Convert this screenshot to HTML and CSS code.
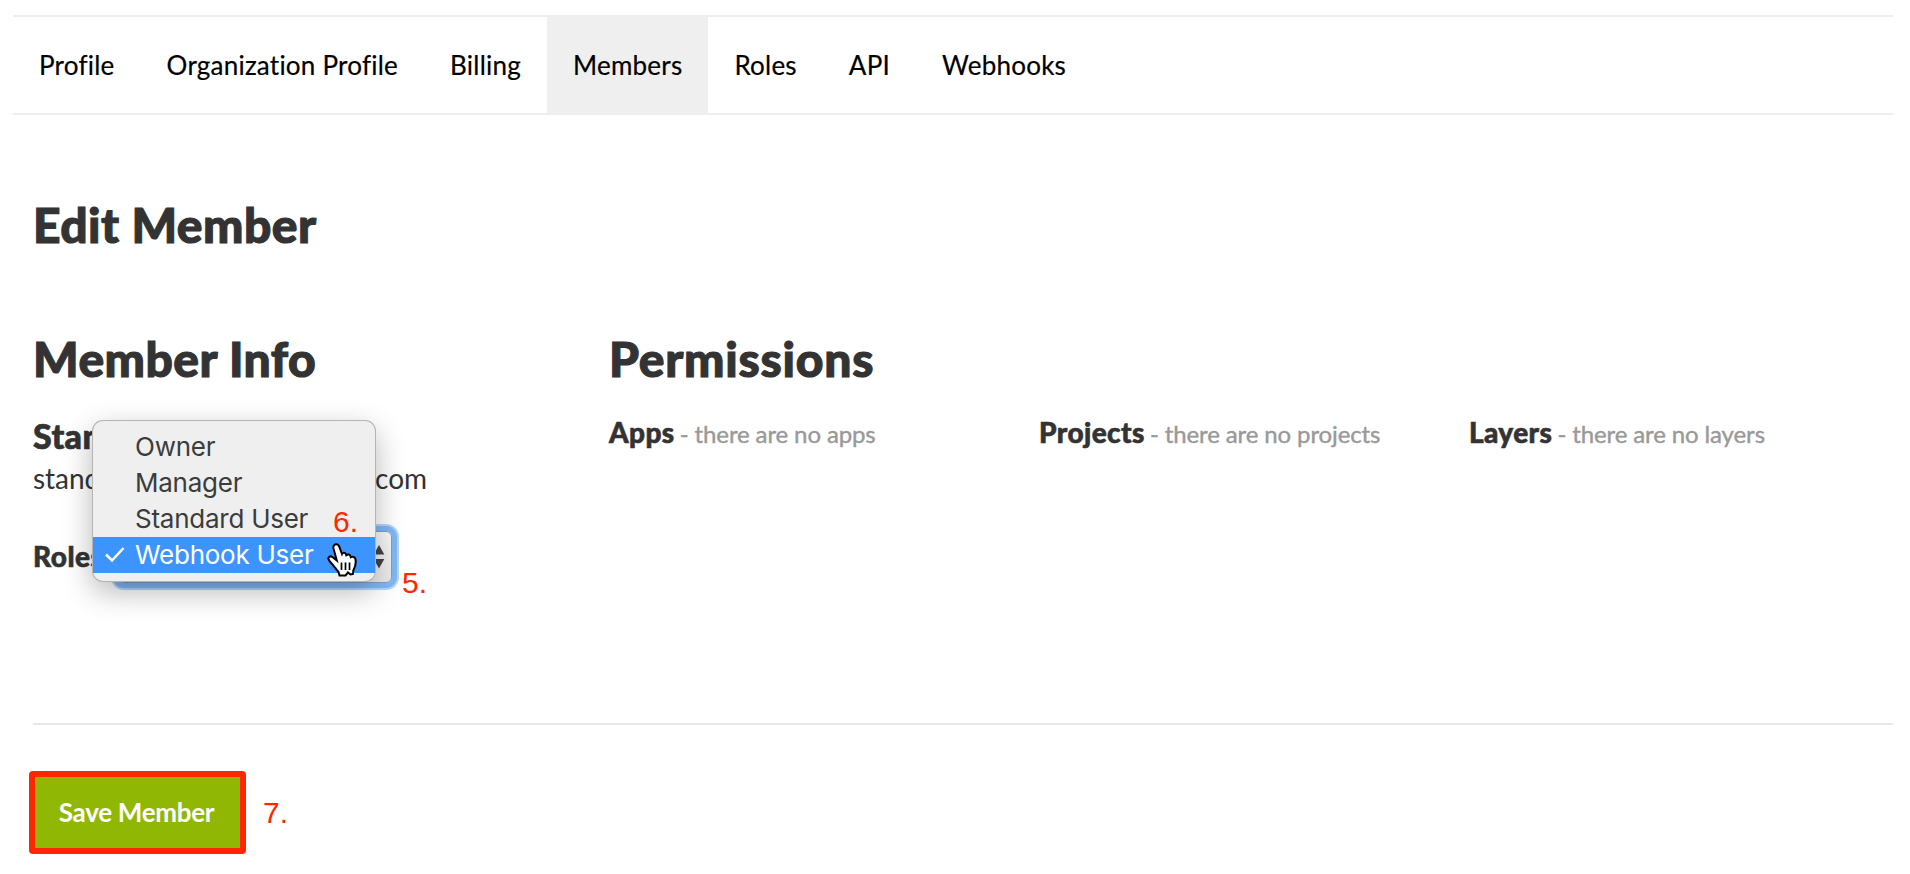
FILE: index.html
```html
<!DOCTYPE html>
<html lang="en">
<head>
<meta charset="utf-8">
<title>Edit Member</title>
<link rel="stylesheet" href="styles.css">
</head>
<body>
<nav class="tabs">
  <a class="tab">Profile</a>
  <a class="tab">Organization Profile</a>
  <a class="tab">Billing</a>
  <a class="tab tab-active">Members</a>
  <a class="tab">Roles</a>
  <a class="tab">API</a>
  <a class="tab">Webhooks</a>
</nav>
<main class="page">
  <h1 class="heading">Edit Member</h1>
  <div class="columns">
    <section class="info">
      <h2 class="heading">Member Info</h2>
      <div class="name">Standard User</div>
      <div class="email">standard.user@mycompany.com</div>
      <div class="role-row">
        <label class="role-label">Roles</label>
        <div class="select">
          <svg class="arrows" width="12" height="26" viewBox="0 0 12 26"><path d="M6 1 11.3 10.5H.7zM6 24.500 .7 15H11.300z" fill="#444"/></svg>
        </div>
        <ul class="menu">
          <li class="option">Owner</li>
          <li class="option">Manager</li>
          <li class="option">Standard User</li>
          <li class="option option-active"><svg class="check" width="22" height="18" viewBox="0 0 22 18"><path d="M2 9.500 8 15.500 19.500 3" fill="none" stroke="#fff" stroke-width="2.500"/></svg>Webhook User</li>
        </ul>
        <span class="note note-six">6.</span>
        <svg class="cursor" width="34" height="38" viewBox="0 0 34 38"><path d="M8 2.500C10 1.500 11.800 2.800 12.300 4.700L15 12C15.800 10 18.500 10.300 19 12.200L19.300 13.200C20.800 11.800 23 12.500 23.500 14.200L23.800 15.200C25.700 14.200 28 15 28.500 17.200C29.300 21.500 28.500 24.500 26.300 28.500L26 32 23.500 32.500 21 30.500 18.500 33.500H12.500L11.500 30C8.500 26.500 6.500 23.500 2.500 19C0 16 2.500 13.200 5.500 15L9.800 18.500 6.500 6.500C6 4.500 6.500 3.200 8 2.500Z" fill="#fff" stroke="#000" stroke-width="2"/><path d="M14.500 20.500V28M18.500 20.500V28M22.500 20.500V28" stroke="#000" stroke-width="1.700"/></svg>
        <span class="note note-five">5.</span>
      </div>
    </section>
    <section class="permissions">
      <h2 class="heading">Permissions</h2>
      <div class="groups">
        <div class="group"><b>Apps</b> <span class="empty">- there are no apps</span></div>
        <div class="group"><b>Projects</b> <span class="empty">- there are no projects</span></div>
        <div class="group"><b>Layers</b> <span class="empty">- there are no layers</span></div>
      </div>
    </section>
  </div>
  <div class="actions">
    <button class="save">Save Member</button>
    <span class="note">7.</span>
  </div>
</main>
</body>
</html>
```
FILE: styles.css
```css
* { box-sizing: border-box; }
body { margin: 0; background: #fff; color: #333; font-family: Lato, "Liberation Sans", sans-serif; }
h1, h2, ul { margin: 0; padding: 0; list-style: none; }

.tabs { display: flex; margin: 15px 17px 0 13px; height: 100px; border: solid #eee; border-width: 2px 0; }
.tab { padding: 0 26px; font-size: 26px; line-height: 96px; color: #000; letter-spacing: .23px; -webkit-text-stroke: .2px #000; }
.tab-active { background: #efefef; }

.page { padding: 80px 17px 0 33px; }
.heading { font-size: 48px; line-height: 59px; font-weight: 900; letter-spacing: .45px; -webkit-text-stroke: 1.1px #333; }
.columns { display: flex; margin-top: 75px; height: 396px; border-bottom: 2px solid #e8e8e8; }
.info { flex: none; width: 576px; }
.name { margin-top: 27px; font-size: 34px; line-height: 42px; font-weight: 900; letter-spacing: .4px; white-space: nowrap; -webkit-text-stroke: .7px #333; }
.email { font-size: 28px; line-height: 42px; letter-spacing: -.04px; }
.role-row { position: relative; display: flex; margin-top: 32px; height: 52px; }
.role-label { width: 85px; font-size: 28px; line-height: 50px; font-weight: 900; letter-spacing: .5px; -webkit-text-stroke: .6px #333; }
.select { display: flex; align-items: center; justify-content: flex-end; width: 274px; height: 52px; padding-right: 6px; border: 1px solid #7d9fc8; border-radius: 6px; background: linear-gradient(#fbfbfb, #e9e9e9); box-shadow: 0 0 0 5px #80b8f8, 0 0 0 7px #b5d6fb; }

.menu { position: absolute; left: 60px; top: -110px; width: 282px; height: 160px; padding: 8px 0 0; border-radius: 10px; background: #efefef; box-shadow: 0 0 0 1px #b4b4b4, 0 10px 30px rgba(0, 0, 0, .3); }
.option { position: relative; padding-left: 42px; font: 26px/36px Inter, sans-serif; letter-spacing: -.25px; color: #3c3c3c; }
.option-active { background: #3e94ff; color: #fff; }
.check { position: absolute; left: 11px; top: 8px; }
.note { font: 30px/34px "Liberation Sans", Arial, sans-serif; color: #ff2600; }
.note-six { position: absolute; left: 300px; top: -26px; }
.note-five { position: absolute; left: 369px; top: 35px; }
.cursor { position: absolute; left: 294px; top: 11px; }

.permissions .heading { letter-spacing: .75px; }
.groups { display: flex; margin-top: 23px; }
.group { flex: none; width: 430px; font-size: 28px; line-height: 42px; white-space: nowrap; }
.group:last-child { width: 424px; }
.group b { font-weight: 900; letter-spacing: .4px; -webkit-text-stroke: .6px #333; }
.empty { margin-left: -2px; font-size: 24px; letter-spacing: -.12px; color: #999; -webkit-text-stroke: .4px #999; }

.actions { display: flex; align-items: center; gap: 17px; margin: 46px 0 0 -4px; }
.save { width: 217px; height: 83px; padding: 0 2px 0 0; border: 6px solid #ff2600; border-radius: 4px; background: #91b705; color: #fff; font: 700 26px/71px Lato, sans-serif; letter-spacing: -.3px; }
```
